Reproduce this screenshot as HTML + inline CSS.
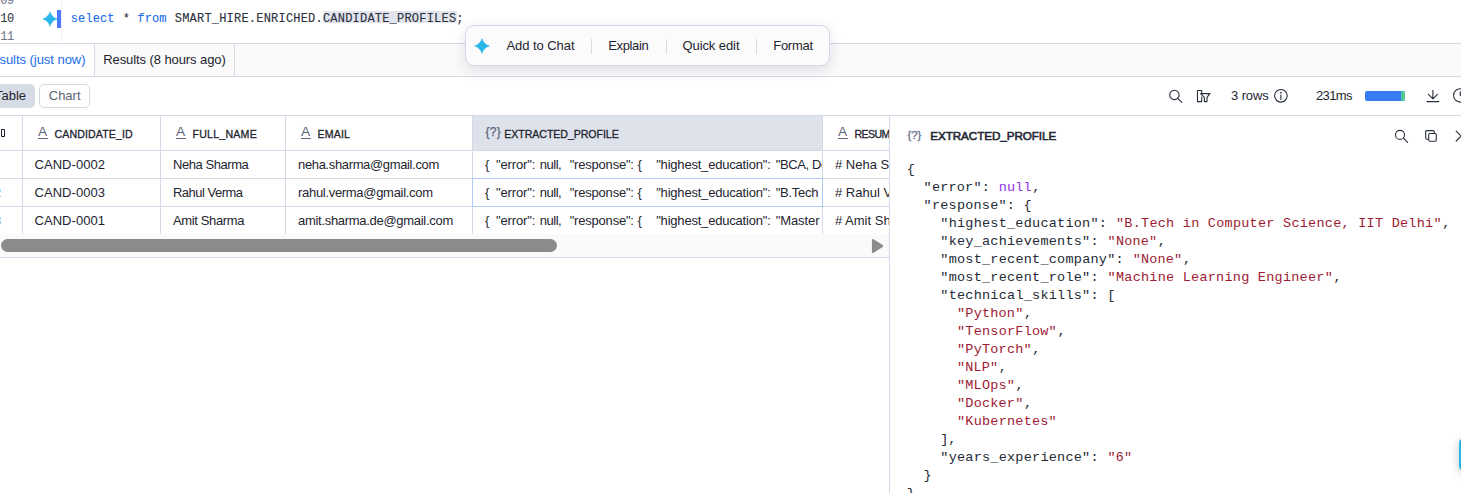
<!DOCTYPE html>
<html lang="en">
<head>
<meta charset="utf-8">
<title>Worksheet results</title>
<style>
html,body{margin:0;padding:0;background:#fff;}
body{width:1461px;height:493px;position:relative;overflow:hidden;font-family:"Liberation Sans",sans-serif;}
.abs,.t{position:absolute;}
.t{white-space:pre;display:block;}
.s{font-family:"Liberation Sans",sans-serif;}
.m{font-family:"Liberation Mono",monospace;}
.hl{background:#e1e4ec;}
.line{position:absolute;background:#d3d9e6;}
.clip{position:absolute;overflow:hidden;}
svg{position:absolute;overflow:visible;}
.ic{fill:none;stroke:#272d3a;stroke-width:1.1;stroke-linecap:round;stroke-linejoin:round;}
</style>
</head>
<body>

<!-- ===== editor ===== -->
<div class="abs" id="editor" style="left:0;top:0;width:1461px;height:43px;background:#fff;">
  <div class="abs" style="left:61px;top:0;width:1px;height:43px;background:#eff0f3;"></div>
  <div class="abs" style="left:57px;top:10px;width:4px;height:18px;background:#4a78ff;"></div>
  <div class="abs hl" style="left:322.5px;top:11px;width:134.5px;height:12px;"></div>
  <svg style="left:39.7px;top:8.9px;" width="20" height="20" viewBox="-10 -10 20 20"><path d="M0,-7.25 C0.73,-3.99 3.99,-0.73 7.25,0 C3.99,0.73 0.73,3.99 0,7.25 C-0.73,3.99 -3.99,0.73 -7.25,0 C-3.99,-0.73 -0.73,-3.99 0,-7.25Z" fill="#29b5e8" stroke="#29b5e8" stroke-width="0.5" stroke-linejoin="round"/></svg>
</div>

<!-- ===== result tabs ===== -->
<div class="abs" id="tabs" style="left:0;top:43px;width:1461px;height:34px;background:#fafafa;">
  <div class="abs" style="left:0;top:0;width:94px;height:34px;background:#fff;"></div>
  <div class="line" style="left:0;top:0;width:1461px;height:1px;"></div>
  <div class="line" style="left:0;top:33px;width:1461px;height:1px;"></div>
  <div class="line" style="left:94px;top:1px;width:1px;height:32px;"></div>
  <div class="line" style="left:234px;top:1px;width:1px;height:32px;"></div>
</div>

<!-- ===== toolbar ===== -->
<div class="abs" id="toolbar" style="left:0;top:77px;width:1461px;height:38px;">
  <div class="abs" style="left:-6px;top:7px;width:41px;height:24px;border-radius:5px;background:#d7dbe6;"></div>
  <div class="abs" style="left:39px;top:7px;width:49px;height:22px;border:1px solid #d3d8e3;border-radius:5px;background:#fff;"></div>
  <!-- search -->
  <svg style="left:1165px;top:10px;" width="20" height="20" viewBox="1165 87 20 20"><circle class="ic" cx="1174.4" cy="94.9" r="4.7"/><path class="ic" d="M1178 98.6 L1181.8 102.4"/></svg>
  <!-- column filter -->
  <svg style="left:1195px;top:10px;" width="20" height="20" viewBox="1195 87 20 20"><path class="ic" stroke-linecap="butt" stroke-linejoin="miter" d="M1201.7 92.6 V90.5 H1197.5 V101.6 H1201.7 V97 M1200.6 93.6 H1209.9 L1207 97.4 V101.6 H1204.4 V97.4 Z"/></svg>
  <!-- info -->
  <svg style="left:1272px;top:10px;" width="20" height="20" viewBox="1272 87 20 20"><circle class="ic" cx="1280.9" cy="95.8" r="6.3"/><path class="ic" d="M1280.9 95 V99.4"/><circle cx="1280.9" cy="92.7" r="0.85" fill="#272d3a"/></svg>
  <!-- progress -->
  <div class="abs" style="left:1365px;top:14px;width:40px;height:10px;border-radius:2px;overflow:hidden;background:#357df0;"><div class="abs" style="right:0;top:0;width:4px;height:10px;background:#52c898;"></div></div>
  <!-- download -->
  <svg style="left:1424px;top:10px;" width="20" height="20" viewBox="1424 87 20 20"><path class="ic" d="M1432.9 90.2 V98.6 M1428.4 94.3 L1432.9 98.8 L1437.4 94.3 M1427 101.6 H1438.9"/></svg>
  <!-- clock -->
  <svg style="left:1450px;top:10px;" width="20" height="20" viewBox="1450 87 20 20"><circle class="ic" cx="1460.3" cy="95.4" r="6.7"/><path class="ic" stroke-width="1.6" d="M1460.3 91.8 V95.6"/></svg>
</div>

<!-- ===== grid ===== -->
<div class="abs" id="grid" style="left:0;top:115px;width:890px;height:143px;">
  <div class="abs" style="left:472.5px;top:1px;width:350px;height:34px;background:#dee2ea;"></div>
  <!-- horizontal lines -->
  <div class="line" style="left:0;top:0;width:1461px;height:1px;"></div>
  <div class="line" style="left:0;top:34.5px;width:890px;height:1px;"></div>
  <div class="line" style="left:0;top:63px;width:890px;height:1px;"></div>
  <div class="line" style="left:0;top:91px;width:890px;height:1px;"></div>
  <!-- vertical lines -->
  <div class="line" style="left:22px;top:1px;width:1px;height:118px;"></div>
  <div class="line" style="left:160px;top:1px;width:1px;height:118px;"></div>
  <div class="line" style="left:285px;top:1px;width:1px;height:118px;"></div>
  <div class="line" style="left:472px;top:1px;width:1px;height:118px;"></div>
  <div class="line" style="left:822px;top:1px;width:1px;height:118px;"></div>
  <!-- selected cell outline -->
  <div class="abs" style="left:472px;top:63px;width:349px;height:27px;border:1px solid #b1cbf6;"></div>
  <!-- scrollbar -->
  <div class="abs" style="left:0;top:119px;width:890px;height:23px;background:#fafafa;"></div>
  <div class="abs" style="left:1px;top:124px;width:556px;height:13px;border-radius:7px;background:#8b8b8b;"></div>
  <svg style="left:868px;top:122px;" width="20" height="18" viewBox="0 0 20 18"><path d="M5 3.2 L14.1 9.05 L5 14.9Z" fill="#8b8b8b" stroke="#8b8b8b" stroke-width="2.2" stroke-linejoin="round"/></svg>
  <div class="line" style="left:0;top:142px;width:890px;height:1px;"></div>
  <!-- corner glyph -->
  <div class="abs" style="left:1.1px;top:14px;width:1.5px;height:5.5px;border:1.1px solid #1e252f;border-radius:0.8px;"></div>
</div>

<!-- ===== detail panel ===== -->
<div class="abs" id="panel" style="left:889px;top:116px;width:572px;height:377px;background:#fff;">
  <div class="line" style="left:0;top:0;width:1px;height:377px;"></div>
  <!-- search -->
  <svg style="left:502px;top:10px;" width="20" height="20" viewBox="1391 126 20 20"><circle class="ic" cx="1400" cy="134.9" r="4.5"/><path class="ic" d="M1403.4 138.2 L1407.6 142.4"/></svg>
  <!-- copy -->
  <svg style="left:532px;top:10px;" width="20" height="20" viewBox="1421 126 20 20"><rect class="ic" x="1425.7" y="130.6" width="8.5" height="8.6" rx="1.15"/><rect class="ic" x="1428.7" y="133.5" width="7.6" height="7.7" rx="1.15" style="fill:#fff"/></svg>
  <!-- close -->
  <svg style="left:562px;top:10px;" width="20" height="20" viewBox="1451 126 20 20"><path class="ic" d="M1456.2 131.2 L1466 141 M1456.2 141 L1466 131.2"/></svg>
  <!-- side tab -->
  <div class="abs" style="left:569.6px;top:322px;width:20px;height:33px;border-radius:5px;background:#29b5e8;box-shadow:0 2px 10px rgba(0,0,0,.22);"></div>
</div>

<!-- ===== floating popup ===== -->
<div class="abs" id="popup" style="left:465px;top:25px;width:365px;height:41px;border:1px solid #d3d9e8;border-radius:9px;background:#fbfbfc;box-shadow:0 4px 14px rgba(30,40,70,.13);box-sizing:border-box;">
</div>
<svg style="left:472.2px;top:35.9px;" width="20" height="20" viewBox="-10 -10 20 20"><path d="M0,-7.40 C0.74,-4.07 4.07,-0.74 7.40,0 C4.07,0.74 0.74,4.07 0,7.40 C-0.74,4.07 -4.07,0.74 -7.40,0 C-4.07,-0.74 -0.74,-4.07 0,-7.40Z" fill="#29b5e8" stroke="#29b5e8" stroke-width="0.5" stroke-linejoin="round"/></svg>
<div class="abs" style="left:591px;top:38.5px;width:1px;height:15px;background:#d6dbe6;"></div>
<div class="abs" style="left:665.5px;top:38.5px;width:1px;height:15px;background:#d6dbe6;"></div>
<div class="abs" style="left:756px;top:38.5px;width:1px;height:15px;background:#d6dbe6;"></div>

<!-- ===== text layers ===== -->
<div class="clip" style="left:0;top:0;width:1461px;height:493px;">
<span class="t m" style="left:0.20px;top:-7.20px;font-size:12px;line-height:16px;color:#6f788b;letter-spacing:-0.406px;-webkit-text-stroke:0.1px currentColor;">09</span>
<span class="t m" style="left:0.20px;top:10.80px;font-size:12px;line-height:16px;color:#363d4b;letter-spacing:-0.406px;-webkit-text-stroke:0.1px currentColor;">10</span>
<span class="t m" style="left:0.20px;top:28.80px;font-size:12px;line-height:16px;color:#6f788b;letter-spacing:-0.406px;-webkit-text-stroke:0.1px currentColor;">11</span>
<span class="t m" style="left:70.80px;top:11.10px;font-size:12px;line-height:16px;color:#1a6ce7;letter-spacing:0.106px;-webkit-text-stroke:0.1px #1a6ce7;">select</span>
<span class="t m" style="left:122.77px;top:11.10px;font-size:12px;line-height:16px;color:#2b313d;letter-spacing:-0.578px;-webkit-text-stroke:0.1px #2b313d;">*</span>
<span class="t m" style="left:137.62px;top:11.10px;font-size:12px;line-height:16px;color:#1a6ce7;letter-spacing:0.029px;-webkit-text-stroke:0.1px #1a6ce7;">from</span>
<span class="t m" style="left:174.75px;top:11.10px;font-size:12px;line-height:16px;color:#2b313d;letter-spacing:0.208px;-webkit-text-stroke:0.1px #2b313d;">SMART_HIRE.ENRICHED.CANDIDATE_PROFILES;</span>
<span class="t s" style="left:-17.10px;top:51.00px;font-size:13px;line-height:17px;color:#1a6ce7;letter-spacing:-0.042px;">Results (just now)</span>
<span class="t s" style="left:103.25px;top:51.00px;font-size:13px;line-height:17px;color:#1e252f;letter-spacing:-0.089px;">Results (8 hours ago)</span>
<span class="t s" style="left:-5.00px;top:86.50px;font-size:13px;line-height:17px;color:#1e252f;letter-spacing:-0.020px;">Table</span>
<span class="t s" style="left:48.75px;top:86.50px;font-size:13px;line-height:17px;color:#5c6473;letter-spacing:-0.012px;">Chart</span>
<span class="t s" style="left:1231.00px;top:86.80px;font-size:13px;line-height:17px;color:#1e252f;letter-spacing:-0.099px;">3 rows</span>
<span class="t s" style="left:1316.00px;top:86.80px;font-size:13px;line-height:17px;color:#1e252f;letter-spacing:-0.633px;">231ms</span>
<span class="t s" style="left:506.50px;top:37.20px;font-size:13px;line-height:17px;color:#1e252f;letter-spacing:-0.066px;">Add to Chat</span>
<span class="t s" style="left:608.25px;top:37.20px;font-size:13px;line-height:17px;color:#1e252f;letter-spacing:-0.357px;">Explain</span>
<span class="t s" style="left:682.50px;top:37.20px;font-size:13px;line-height:17px;color:#1e252f;letter-spacing:-0.090px;">Quick edit</span>
<span class="t s" style="left:773.25px;top:37.20px;font-size:13px;line-height:17px;color:#1e252f;letter-spacing:-0.284px;">Format</span>
<span class="t s" style="left:37.80px;top:124.07px;font-size:12.5px;line-height:16px;color:#5e6577;letter-spacing:0.256px;border-bottom:1.2px solid #5e6577;height:14.3px;line-height:16px;overflow:visible;transform:scaleX(1.1);transform-origin:0 0;">A</span>
<span class="t s" style="left:54.60px;top:127.23px;font-size:10.6px;line-height:14px;color:#1e252f;letter-spacing:0.107px;-webkit-text-stroke:0.3px #1e252f;">CANDIDATE_ID</span>
<span class="t s" style="left:176.00px;top:124.07px;font-size:12.5px;line-height:16px;color:#5e6577;letter-spacing:0.256px;border-bottom:1.2px solid #5e6577;height:14.3px;line-height:16px;overflow:visible;transform:scaleX(1.1);transform-origin:0 0;">A</span>
<span class="t s" style="left:192.50px;top:127.23px;font-size:10.6px;line-height:14px;color:#1e252f;letter-spacing:0.230px;-webkit-text-stroke:0.3px #1e252f;">FULL_NAME</span>
<span class="t s" style="left:301.20px;top:124.07px;font-size:12.5px;line-height:16px;color:#5e6577;letter-spacing:0.256px;border-bottom:1.2px solid #5e6577;height:14.3px;line-height:16px;overflow:visible;transform:scaleX(1.1);transform-origin:0 0;">A</span>
<span class="t s" style="left:317.50px;top:127.23px;font-size:10.6px;line-height:14px;color:#1e252f;letter-spacing:0.176px;-webkit-text-stroke:0.3px #1e252f;">EMAIL</span>
<span class="t s" style="left:485.50px;top:124.34px;font-size:12px;line-height:16px;color:#5b6478;letter-spacing:0.273px;-webkit-text-stroke:0.25px #5b6478;">{?}</span>
<span class="t s" style="left:504.25px;top:127.23px;font-size:10.6px;line-height:14px;color:#1e252f;letter-spacing:-0.056px;-webkit-text-stroke:0.3px #1e252f;">EXTRACTED_PROFILE</span>
<span class="t s" style="left:34.50px;top:155.90px;font-size:13px;line-height:17px;color:#1e252f;letter-spacing:0.051px;">CAND-0002</span>
<span class="t s" style="left:173.00px;top:155.90px;font-size:13px;line-height:17px;color:#1e252f;letter-spacing:-0.447px;">Neha Sharma</span>
<span class="t s" style="left:298.00px;top:155.90px;font-size:13px;line-height:17px;color:#1e252f;letter-spacing:-0.354px;">neha.sharma@gmail.com</span>
<span class="t s" style="left:34.50px;top:184.10px;font-size:13px;line-height:17px;color:#1e252f;letter-spacing:0.051px;">CAND-0003</span>
<span class="t s" style="left:173.00px;top:184.10px;font-size:13px;line-height:17px;color:#1e252f;letter-spacing:-0.516px;">Rahul Verma</span>
<span class="t s" style="left:298.00px;top:184.10px;font-size:13px;line-height:17px;color:#1e252f;letter-spacing:-0.304px;">rahul.verma@gmail.com</span>
<span class="t s" style="left:34.50px;top:212.30px;font-size:13px;line-height:17px;color:#1e252f;letter-spacing:0.051px;">CAND-0001</span>
<span class="t s" style="left:173.00px;top:212.30px;font-size:13px;line-height:17px;color:#1e252f;letter-spacing:-0.364px;">Amit Sharma</span>
<span class="t s" style="left:298.00px;top:212.30px;font-size:13px;line-height:17px;color:#1e252f;letter-spacing:-0.295px;">amit.sharma.de@gmail.com</span>
<span class="t s" style="left:-5.60px;top:184.94px;font-size:12px;line-height:16px;color:#7f9fdc;">2</span>
<span class="t s" style="left:-5.60px;top:213.14px;font-size:12px;line-height:16px;color:#7f9fdc;">3</span>
<span class="t s" style="left:907.40px;top:127.88px;font-size:11.3px;line-height:15px;color:#67718a;letter-spacing:0.028px;-webkit-text-stroke:0.3px #67718a;">{?}</span>
<span class="t s" style="left:930.25px;top:127.65px;font-size:11.7px;line-height:15px;color:#1e252f;letter-spacing:-0.081px;-webkit-text-stroke:0.55px #1e252f;">EXTRACTED_PROFILE</span>
<span class="t m" style="left:906.85px;top:161.40px;font-size:13.5px;line-height:18px;color:#232a36;letter-spacing:-0.444px;">{</span>
<span class="t m" style="left:923.58px;top:179.40px;font-size:13.5px;line-height:18px;color:#232a36;letter-spacing:0.201px;">"error":</span>
<span class="t m" style="left:998.87px;top:179.40px;font-size:13.5px;line-height:18px;color:#9333ea;letter-spacing:0.118px;">null</span>
<span class="t m" style="left:1032.33px;top:179.40px;font-size:13.5px;line-height:18px;color:#232a36;letter-spacing:-0.444px;">,</span>
<span class="t m" style="left:923.58px;top:197.40px;font-size:13.5px;line-height:18px;color:#232a36;letter-spacing:0.226px;">"response": {</span>
<span class="t m" style="left:940.31px;top:215.40px;font-size:13.5px;line-height:18px;color:#232a36;letter-spacing:0.240px;">"highest_education":</span>
<span class="t m" style="left:1115.98px;top:215.40px;font-size:13.5px;line-height:18px;color:#9d1b33;letter-spacing:0.252px;">"B.Tech in Computer Science, IIT Delhi"</span>
<span class="t m" style="left:1442.21px;top:215.40px;font-size:13.5px;line-height:18px;color:#232a36;letter-spacing:-0.444px;">,</span>
<span class="t m" style="left:940.31px;top:233.40px;font-size:13.5px;line-height:18px;color:#232a36;letter-spacing:0.239px;">"key_achievements":</span>
<span class="t m" style="left:1107.61px;top:233.40px;font-size:13.5px;line-height:18px;color:#9d1b33;letter-spacing:0.176px;">"None"</span>
<span class="t m" style="left:1157.80px;top:233.40px;font-size:13.5px;line-height:18px;color:#232a36;letter-spacing:-0.444px;">,</span>
<span class="t m" style="left:940.31px;top:251.40px;font-size:13.5px;line-height:18px;color:#232a36;letter-spacing:0.243px;">"most_recent_company":</span>
<span class="t m" style="left:1132.71px;top:251.40px;font-size:13.5px;line-height:18px;color:#9d1b33;letter-spacing:0.176px;">"None"</span>
<span class="t m" style="left:1182.90px;top:251.40px;font-size:13.5px;line-height:18px;color:#232a36;letter-spacing:-0.444px;">,</span>
<span class="t m" style="left:940.31px;top:269.40px;font-size:13.5px;line-height:18px;color:#232a36;letter-spacing:0.239px;">"most_recent_role":</span>
<span class="t m" style="left:1107.61px;top:269.40px;font-size:13.5px;line-height:18px;color:#9d1b33;letter-spacing:0.246px;">"Machine Learning Engineer"</span>
<span class="t m" style="left:1333.47px;top:269.40px;font-size:13.5px;line-height:18px;color:#232a36;letter-spacing:-0.444px;">,</span>
<span class="t m" style="left:940.31px;top:287.40px;font-size:13.5px;line-height:18px;color:#232a36;letter-spacing:0.241px;">"technical_skills": [</span>
<span class="t m" style="left:957.04px;top:305.40px;font-size:13.5px;line-height:18px;color:#9d1b33;letter-spacing:0.201px;">"Python"</span>
<span class="t m" style="left:1023.96px;top:305.40px;font-size:13.5px;line-height:18px;color:#232a36;letter-spacing:-0.444px;">,</span>
<span class="t m" style="left:957.04px;top:323.40px;font-size:13.5px;line-height:18px;color:#9d1b33;letter-spacing:0.224px;">"TensorFlow"</span>
<span class="t m" style="left:1057.42px;top:323.40px;font-size:13.5px;line-height:18px;color:#232a36;letter-spacing:-0.444px;">,</span>
<span class="t m" style="left:957.04px;top:341.40px;font-size:13.5px;line-height:18px;color:#9d1b33;letter-spacing:0.208px;">"PyTorch"</span>
<span class="t m" style="left:1032.33px;top:341.40px;font-size:13.5px;line-height:18px;color:#232a36;letter-spacing:-0.444px;">,</span>
<span class="t m" style="left:957.04px;top:359.40px;font-size:13.5px;line-height:18px;color:#9d1b33;letter-spacing:0.152px;">"NLP"</span>
<span class="t m" style="left:998.87px;top:359.40px;font-size:13.5px;line-height:18px;color:#232a36;letter-spacing:-0.444px;">,</span>
<span class="t m" style="left:957.04px;top:377.40px;font-size:13.5px;line-height:18px;color:#9d1b33;letter-spacing:0.189px;">"MLOps"</span>
<span class="t m" style="left:1015.60px;top:377.40px;font-size:13.5px;line-height:18px;color:#232a36;letter-spacing:-0.444px;">,</span>
<span class="t m" style="left:957.04px;top:395.40px;font-size:13.5px;line-height:18px;color:#9d1b33;letter-spacing:0.201px;">"Docker"</span>
<span class="t m" style="left:1023.96px;top:395.40px;font-size:13.5px;line-height:18px;color:#232a36;letter-spacing:-0.444px;">,</span>
<span class="t m" style="left:957.04px;top:413.40px;font-size:13.5px;line-height:18px;color:#9d1b33;letter-spacing:0.224px;">"Kubernetes"</span>
<span class="t m" style="left:940.31px;top:431.40px;font-size:13.5px;line-height:18px;color:#232a36;letter-spacing:-0.173px;">],</span>
<span class="t m" style="left:940.31px;top:449.40px;font-size:13.5px;line-height:18px;color:#232a36;letter-spacing:0.239px;">"years_experience":</span>
<span class="t m" style="left:1107.61px;top:449.40px;font-size:13.5px;line-height:18px;color:#9d1b33;letter-spacing:0.041px;">"6"</span>
<span class="t m" style="left:923.58px;top:467.40px;font-size:13.5px;line-height:18px;color:#232a36;letter-spacing:-0.444px;">}</span>
<span class="t m" style="left:906.85px;top:485.40px;font-size:13.5px;line-height:18px;color:#232a36;letter-spacing:-0.444px;">}</span>
</div>
<div class="clip" style="left:0;top:115px;width:821.5px;height:120px;"><div class="abs" style="left:0;top:-115px;">
<span class="t s" style="left:485.00px;top:155.90px;font-size:13px;line-height:17px;color:#1e252f;">{</span>
<span class="t s" style="left:496.00px;top:155.90px;font-size:13px;line-height:17px;color:#1e252f;letter-spacing:-0.128px;">"error":</span>
<span class="t s" style="left:539.80px;top:155.90px;font-size:13px;line-height:17px;color:#1e252f;letter-spacing:-0.490px;">null,</span>
<span class="t s" style="left:569.70px;top:155.90px;font-size:13px;line-height:17px;color:#1e252f;letter-spacing:-0.203px;">"response":</span>
<span class="t s" style="left:637.60px;top:155.90px;font-size:13px;line-height:17px;color:#1e252f;">{</span>
<span class="t s" style="left:656.20px;top:155.90px;font-size:13px;line-height:17px;color:#1e252f;letter-spacing:-0.201px;">"highest_education":</span>
<span class="t s" style="left:775.75px;top:155.90px;font-size:13px;line-height:17px;color:#1e252f;letter-spacing:-0.370px;">"BCA, Delhi</span>
<span class="t s" style="left:485.00px;top:184.10px;font-size:13px;line-height:17px;color:#1e252f;">{</span>
<span class="t s" style="left:496.00px;top:184.10px;font-size:13px;line-height:17px;color:#1e252f;letter-spacing:-0.128px;">"error":</span>
<span class="t s" style="left:539.80px;top:184.10px;font-size:13px;line-height:17px;color:#1e252f;letter-spacing:-0.490px;">null,</span>
<span class="t s" style="left:569.70px;top:184.10px;font-size:13px;line-height:17px;color:#1e252f;letter-spacing:-0.203px;">"response":</span>
<span class="t s" style="left:637.60px;top:184.10px;font-size:13px;line-height:17px;color:#1e252f;">{</span>
<span class="t s" style="left:656.20px;top:184.10px;font-size:13px;line-height:17px;color:#1e252f;letter-spacing:-0.201px;">"highest_education":</span>
<span class="t s" style="left:775.75px;top:184.10px;font-size:13px;line-height:17px;color:#1e252f;letter-spacing:-0.268px;">"B.Tech</span>
<span class="t s" style="left:485.00px;top:212.30px;font-size:13px;line-height:17px;color:#1e252f;">{</span>
<span class="t s" style="left:496.00px;top:212.30px;font-size:13px;line-height:17px;color:#1e252f;letter-spacing:-0.128px;">"error":</span>
<span class="t s" style="left:539.80px;top:212.30px;font-size:13px;line-height:17px;color:#1e252f;letter-spacing:-0.490px;">null,</span>
<span class="t s" style="left:569.70px;top:212.30px;font-size:13px;line-height:17px;color:#1e252f;letter-spacing:-0.203px;">"response":</span>
<span class="t s" style="left:637.60px;top:212.30px;font-size:13px;line-height:17px;color:#1e252f;">{</span>
<span class="t s" style="left:656.20px;top:212.30px;font-size:13px;line-height:17px;color:#1e252f;letter-spacing:-0.201px;">"highest_education":</span>
<span class="t s" style="left:775.75px;top:212.30px;font-size:13px;line-height:17px;color:#1e252f;letter-spacing:-0.102px;">"Master</span>
</div></div>
<div class="clip" style="left:0;top:115px;width:889px;height:120px;"><div class="abs" style="left:0;top:-115px;">
<span class="t s" style="left:837.80px;top:124.07px;font-size:12.5px;line-height:16px;color:#5e6577;letter-spacing:0.256px;border-bottom:1.2px solid #5e6577;height:14.3px;line-height:16px;overflow:visible;transform:scaleX(1.1);transform-origin:0 0;">A</span>
<span class="t s" style="left:854.50px;top:127.23px;font-size:10.6px;line-height:14px;color:#1e252f;letter-spacing:-0.630px;-webkit-text-stroke:0.3px #1e252f;">RESUME_TEXT</span>
<span class="t s" style="left:835.00px;top:155.90px;font-size:13px;line-height:17px;color:#1e252f;"># Neha Sharma</span>
<span class="t s" style="left:835.00px;top:184.10px;font-size:13px;line-height:17px;color:#1e252f;"># Rahul Verma</span>
<span class="t s" style="left:835.00px;top:212.30px;font-size:13px;line-height:17px;color:#1e252f;"># Amit Sharma</span>
</div></div>
</body>
</html>
